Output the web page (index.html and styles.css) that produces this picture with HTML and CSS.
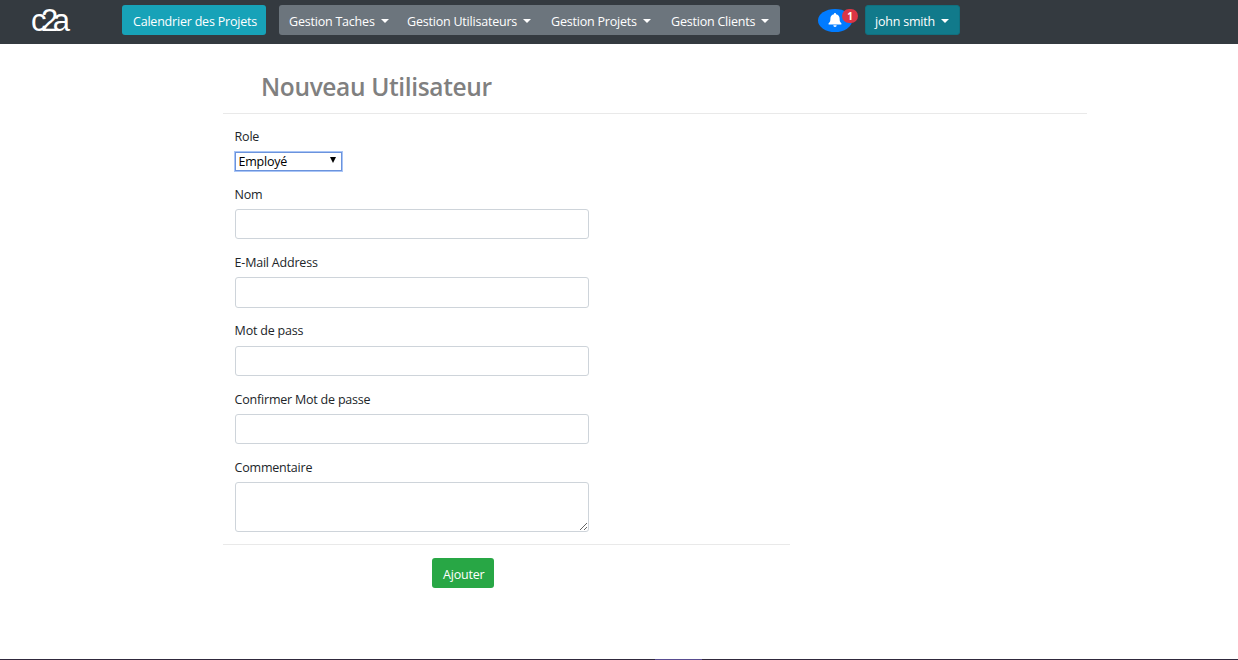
FILE: index.html
```
<!DOCTYPE html>
<html lang="fr">
<head>
<meta charset="utf-8">
<title>Nouveau Utilisateur</title>
<link rel="stylesheet" href="styles.css">
</head>
<body>
<nav class="navbar">
  <svg class="logo" width="42" height="26" viewBox="0 0 42 26" role="img" aria-label="c2a">
    <text class="logo-text" x="0" y="23" textLength="39" lengthAdjust="spacing">c2a</text>
  </svg>
  <button class="btn btn-info">Calendrier des Projets</button>
  <div class="btn-group">
    <button class="btn menu-1">Gestion Taches<i class="caret"></i></button>
    <button class="btn menu-2">Gestion Utilisateurs<i class="caret"></i></button>
    <button class="btn menu-3">Gestion Projets<i class="caret"></i></button>
    <button class="btn menu-4">Gestion Clients<i class="caret"></i></button>
  </div>
  <div class="bell">
    <svg width="14" height="14" viewBox="0 0 14 14"><path fill="#fff" d="M7 0c.6 0 1 .4 1 1v.3c2.300.5 3.600 2 3.600 4.100 0 2.800.5 3.600 1.500 4.500.8.8.3 1.700-.4 1.700H1.300c-.7 0-1.200-.9-.4-1.700 1-.9 1.500-1.700 1.500-4.500C2.400 3.300 3.700 1.800 6 1.300V1c0-.6.4-1 1-1zM5.300 12.200h3.400a1.700 1.700 0 0 1-3.400 0z"/></svg>
    <span class="badge">1</span>
  </div>
  <button class="btn btn-user">john smith<i class="caret"></i></button>
</nav>
<main class="page">
  <h1 class="title">Nouveau Utilisateur</h1>
  <form class="form">
    <div class="field role-field">
      <label>Role</label>
      <div class="select"><span>Employé</span><i class="arrow"></i></div>
    </div>
    <div class="field"><label>Nom</label><input type="text" class="control"></div>
    <div class="field"><label>E-Mail Address</label><input type="email" class="control"></div>
    <div class="field"><label>Mot de pass</label><input type="password" class="control"></div>
    <div class="field"><label>Confirmer Mot de passe</label><input type="password" class="control"></div>
    <div class="field"><label>Commentaire</label><textarea class="control area"></textarea></div>
  </form>
  <div class="actions"><button class="btn btn-add">Ajouter</button></div>
</main>
<footer class="edge"><span class="edge-mark"></span></footer>
</body>
</html>
```
FILE: styles.css
```
* { box-sizing: border-box; }
body {
  margin: 0;
  height: 660px;
  overflow: hidden;
  display: flex;
  flex-direction: column;
  background: #fff;
  color: #212529;
  font-family: "Open Sans", "Noto Sans", sans-serif;
  font-size: 12.5px;
  letter-spacing: -0.21px;
}
.navbar {
  height: 44px;
  flex: none;
  display: flex;
  align-items: flex-start;
  padding: 5px 0 0 31px;
  background: #343a40;
}
.logo { margin: 3px 49px 0 0; overflow: visible; }
.logo-text {
  fill: #fff;
  font-family: "Liberation Sans", sans-serif;
  font-size: 31px;
  letter-spacing: 0;
}
.btn {
  height: 30px;
  border: 0;
  border-radius: 3px;
  padding: 2px 0 0 10px;
  display: flex;
  align-items: center;
  color: #fff;
  font: inherit;
  letter-spacing: inherit;
  white-space: nowrap;
}
.btn-info { width: 144px; margin-right: 13px; padding-left: 11px; background: #17a2b8; }
.btn-group {
  display: flex;
  width: 501px;
  margin-right: 38px;
  border-radius: 3px;
  background: #6c757d;
}
.btn-group .btn { background: transparent; }
.menu-1 { width: 118px; }
.menu-2 { width: 144px; }
.menu-3 { width: 120px; }
.menu-4 { width: 119px; }
.caret {
  margin: -1px 0 0 6px;
  border: 4px solid transparent;
  border-top-color: #fff;
  border-bottom: 0;
}
.bell {
  position: relative;
  width: 34px;
  height: 23px;
  margin: 4px 13px 0 0;
  padding: 4px 0 0 10px;
  border-radius: 50%;
  background: #007bff;
}
.bell svg { display: block; }
.badge {
  position: absolute;
  left: 24px;
  top: 0;
  width: 16px;
  height: 14px;
  border-radius: 7px;
  background: #dc3545;
  color: #fff;
  font-size: 10px;
  font-weight: 700;
  line-height: 14px;
  text-align: center;
}
.btn-user {
  width: 95px;
  background: #117a8b;
  border: 1px solid #10707f;
  padding: 2px 0 0 9px;
}
.page { width: 864px; margin-left: 223px; flex: 1; }
.title {
  height: 70px;
  margin: 0;
  padding: 23px 0 0 38px;
  border-bottom: 1px solid #e9e9e9;
  color: #808080;
  font-size: 24.5px;
  font-weight: 600;
  line-height: 40px;
  letter-spacing: -0.36px;
}
.form {
  width: 567px;
  height: 431px;
  padding: 12.7px 0 0 12px;
  border-bottom: 1px solid #e9e9e9;
}
.field { height: 68.3px; }
.role-field { height: 58px; }
.field label { display: block; height: 24.3px; margin-left: -0.4px; line-height: 20px; }
.control {
  display: block;
  width: 354px;
  height: 30.4px;
  padding: 4px 8px;
  border: 1px solid #ced4da;
  border-radius: 3px;
  font: inherit;
  background: #fff;
}
.area { height: 50px; resize: vertical; }
.select {
  display: flex;
  align-items: center;
  justify-content: space-between;
  width: 107px;
  height: 19px;
  margin-top: 1px;
  padding: 1px 5px 0 2.5px;
  border: 1px solid #6b93dc;
  box-shadow: 0 0 0 1px #a9c5f7;
  color: #000;
}
.arrow { margin-top: -3px; border: 3.5px solid transparent; border-top: 6px solid #000; border-bottom: 0; }
.actions { padding: 13px 0 0 209px; }
.btn-add { width: 62px; padding-left: 11px; background: #28a745; }
.edge { flex: none; height: 1px; background: #30293d; }
.edge-mark { display: block; width: 47px; height: 1px; margin-left: 655px; background: #594d91; }
```
